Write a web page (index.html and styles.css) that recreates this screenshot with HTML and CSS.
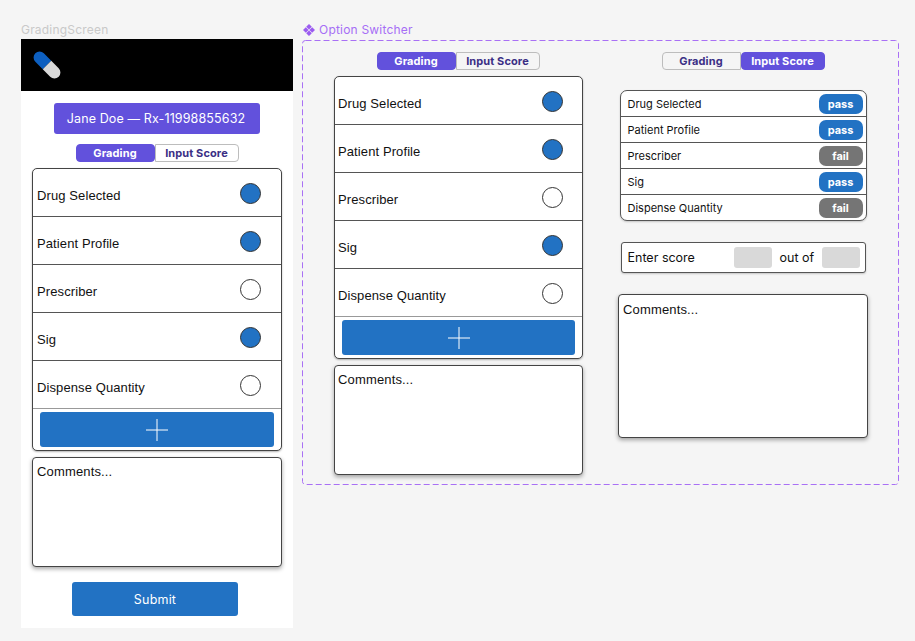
FILE: index.html
```html
<!DOCTYPE html>
<html lang="en">
<head>
  <meta charset="UTF-8" />
  <title>GradingScreen</title>
  <link rel="stylesheet" href="styles.css">
</head>
<body>
  <div class="frame-label grading-label">GradingScreen</div>
  <section class="phone">
    <header class="phone-top">
      <svg class="capsule" width="30" height="30" viewBox="0 0 30 30">
        <g transform="rotate(45 15 15)">
          <path d="M15 9 H4.5 A6 6 0 0 0 4.5 21 H15 Z" fill="#0d5fc0" />
          <path d="M15 9 H25.5 A6 6 0 0 1 25.5 21 H15 Z" fill="#d9d9d9" />
        </g>
      </svg>
    </header>
    <div class="phone-body">
      <div class="patient">Jane Doe — Rx-11998855632</div>
      <div class="tabs">
        <span class="tab tab-left on">Grading</span>
        <span class="tab tab-right">Input Score</span>
      </div>
      <div class="grade-card">
        <div class="grade-row"><span>Drug Selected</span><i class="dot full"></i></div>
        <div class="grade-row"><span>Patient Profile</span><i class="dot full"></i></div>
        <div class="grade-row"><span>Prescriber</span><i class="dot"></i></div>
        <div class="grade-row"><span>Sig</span><i class="dot full"></i></div>
        <div class="grade-row"><span>Dispense Quantity</span><i class="dot"></i></div>
        <div class="add-btn"><svg width="22" height="22" viewBox="0 0 22 22"><path d="M11 0V22M0 11H22" stroke="#fff" stroke-width="1" fill="none" /></svg></div>
      </div>
      <div class="comments">Comments...</div>
      <div class="submit">Submit</div>
    </div>
  </section>

  <div class="frame-label switcher-label">
    <svg width="12" height="12" viewBox="0 0 12 12"><path d="M6 0 8.8 2.8 6 5.6 3.2 2.8ZM2.8 3.2 5.6 6 2.8 8.8 0 6ZM9.2 3.2 12 6 9.2 8.8 6.4 6ZM6 6.4 8.8 9.2 6 12 3.2 9.2Z" fill="#9b5cf0" /></svg>
    Option Switcher
  </div>
  <section class="switcher">
    <svg class="outline" width="597" height="445"><rect x="0.5" y="0.5" width="596" height="444" rx="3" fill="none" stroke="#a970f5" stroke-width="1" stroke-dasharray="6 3" /></svg>
    <div class="variant">
      <div class="tabs">
        <span class="tab tab-left on">Grading</span>
        <span class="tab tab-right">Input Score</span>
      </div>
      <div class="grade-card">
        <div class="grade-row"><span>Drug Selected</span><i class="dot full"></i></div>
        <div class="grade-row"><span>Patient Profile</span><i class="dot full"></i></div>
        <div class="grade-row"><span>Prescriber</span><i class="dot"></i></div>
        <div class="grade-row"><span>Sig</span><i class="dot full"></i></div>
        <div class="grade-row"><span>Dispense Quantity</span><i class="dot"></i></div>
        <div class="add-btn"><svg width="22" height="22" viewBox="0 0 22 22"><path d="M11 0V22M0 11H22" stroke="#fff" stroke-width="1" fill="none" /></svg></div>
      </div>
      <div class="comments">Comments...</div>
    </div>
    <div class="variant">
      <div class="tabs">
        <span class="tab tab-left">Grading</span>
        <span class="tab tab-right on">Input Score</span>
      </div>
      <div class="score-card">
        <div class="score-row"><span>Drug Selected</span><b class="pill pass">pass</b></div>
        <div class="score-row"><span>Patient Profile</span><b class="pill pass">pass</b></div>
        <div class="score-row"><span>Prescriber</span><b class="pill fail">fail</b></div>
        <div class="score-row"><span>Sig</span><b class="pill pass">pass</b></div>
        <div class="score-row"><span>Dispense Quantity</span><b class="pill fail">fail</b></div>
      </div>
      <div class="enter-score">
        <span class="enter-text">Enter score</span>
        <i class="score-input"></i>
        <span>out of</span>
        <i class="score-input"></i>
      </div>
      <div class="comments tall">Comments...</div>
    </div>
  </section>
</body>
</html>
```

FILE: styles.css
```css
body {
  margin: 0;
  width: 915px;
  height: 641px;
  position: relative;
  overflow: hidden;
  background: #f5f5f5;
  font-family: 'Liberation Sans', Arial, sans-serif;
  color: #111;
}
i { display: block; }

.frame-label {
  position: absolute;
  font-family: Inter, sans-serif;
  font-size: 12px;
  line-height: 15px;
  letter-spacing: 0.2px;
  top: 22px;
}
.grading-label {
  left: 21px;
  color: #c9c9c9;
}
.switcher-label {
  left: 303px;
  color: #a66ef5;
  display: flex;
  align-items: center;
  gap: 4px;
}

.phone {
  position: absolute;
  left: 21px;
  top: 39px;
  width: 272px;
  height: 589px;
  background: #fff;
}
.phone-top {
  height: 52px;
  background: #000;
  padding: 10.5px 0 0 10.5px;
  box-sizing: border-box;
}
.capsule { display: block; }
.phone-body {
  display: flex;
  flex-direction: column;
  align-items: center;
  padding: 12px 11px 0;
}
.patient {
  width: 206px;
  height: 31px;
  box-sizing: border-box;
  padding-right: 2px;
  display: flex;
  align-items: center;
  justify-content: center;
  background: #6251dc;
  border-radius: 3px;
  color: #fff;
  font-family: Inter, sans-serif;
  font-size: 12.5px;
  letter-spacing: 0.12px;
  margin-bottom: 10px;
}
.submit {
  width: 166px;
  height: 34px;
  margin: 15px 4px 0 0;
  display: flex;
  align-items: center;
  justify-content: center;
  background: #2272c3;
  border-radius: 3px;
  color: #fff;
  font-family: Inter, sans-serif;
  font-size: 12.5px;
  letter-spacing: 0.2px;
}

.tabs {
  display: flex;
  height: 18px;
  margin-bottom: 6px;
  font-family: Inter, sans-serif;
  font-size: 11px;
  font-weight: 700;
  letter-spacing: 0.1px;
  color: #3b2f85;
}
.tab {
  display: flex;
  align-items: center;
  justify-content: center;
  box-sizing: border-box;
  background: #fff;
  border: 1px solid #bdbdbd;
}
.tab-left {
  width: 79px;
  border-radius: 4px 0 0 4px;
}
.tab-right {
  width: 84px;
  border-radius: 0 4px 4px 0;
}
.tab.on {
  border-radius: 4px;
}
.switcher .tab { background: #f5f5f5; }
.tab.on, .switcher .tab.on {
  background: #6251dc;
  border-color: #6251dc;
  color: #fff;
}

.grade-card {
  width: 250px;
  box-sizing: border-box;
  background: #fff;
  border: 1px solid #444;
  border-radius: 5px;
  box-shadow: 0 1px 2px rgba(0, 0, 0, 0.3);
  padding-bottom: 3px;
}
.grade-row {
  height: 48px;
  box-sizing: border-box;
  display: flex;
  align-items: center;
  justify-content: space-between;
  padding: 6px 20px 0 4px;
  border-bottom: 1px solid #555;
  font-size: 13px;
  letter-spacing: 0.1px;
}
.grade-row:nth-child(5) { border-bottom-color: #999; }
.dot {
  width: 21px;
  height: 21px;
  box-sizing: border-box;
  border: 1px solid #333;
  border-radius: 50%;
  background: #fff;
  margin-top: -4px;
}
.dot.full { background: #2272c3; }
.add-btn {
  height: 35px;
  margin: 3px 7px 0;
  display: flex;
  align-items: center;
  justify-content: center;
  background: #2272c3;
  border-radius: 3px;
}

.comments {
  width: 250px;
  height: 110px;
  box-sizing: border-box;
  margin-top: 6px;
  padding: 6px 4px;
  background: #fff;
  border: 1px solid #444;
  border-radius: 4px;
  box-shadow: 0 2px 4px rgba(0, 0, 0, 0.35);
  font-size: 13px;
  line-height: 15px;
  letter-spacing: 0.15px;
}
.comments.tall {
  height: 144px;
  padding-top: 7px;
  margin-top: 21px;
}

.switcher {
  position: absolute;
  left: 302px;
  top: 40px;
  width: 597px;
  height: 445px;
  box-sizing: border-box;
  padding: 12px 0 0 31px;
  display: flex;
  gap: 35px;
}
.outline {
  position: absolute;
  left: 0;
  top: 0;
}
.variant {
  width: 250px;
  display: flex;
  flex-direction: column;
  align-items: center;
}
.variant > .grade-card {
  width: 249px;
  align-self: flex-end;
}
.variant > .grade-card .grade-row { padding: 6px 19px 0 3px; }
.variant > .comments:not(.tall) {
  width: 249px;
  align-self: flex-end;
  padding-left: 3px;
}

.score-card {
  width: 247px;
  box-sizing: border-box;
  margin-top: 14px;
  background: #fff;
  border: 1px solid #555;
  border-radius: 7px;
  box-shadow: 0 1px 2px rgba(0, 0, 0, 0.2);
  font-family: Inter, sans-serif;
  font-size: 11px;
}
.score-row {
  height: 26px;
  box-sizing: border-box;
  display: flex;
  align-items: center;
  justify-content: space-between;
  padding: 0 3px 0 7px;
  border-bottom: 1px solid #555;
}
.score-row:last-child {
  border-bottom: 0;
  height: 25px;
}
.pill {
  width: 44px;
  height: 20px;
  display: flex;
  align-items: center;
  justify-content: center;
  border-radius: 7px;
  color: #fff;
  font-size: 11px;
  font-weight: 700;
}
.pass { background: #2272c3; }
.fail { background: #757575; }

.enter-score {
  width: 245px;
  height: 31px;
  box-sizing: border-box;
  margin-top: 21px;
  padding: 0 4px 0 6px;
  display: flex;
  align-items: center;
  gap: 8px;
  background: #fff;
  border: 1px solid #555;
  border-radius: 3px;
  box-shadow: 0 1px 2px rgba(0, 0, 0, 0.2);
  font-family: Inter, sans-serif;
  font-size: 12.5px;
}
.enter-text { width: 98px; }
.score-input {
  width: 38px;
  height: 21px;
  background: #d9d9d9;
  border-radius: 3px;
}
```
